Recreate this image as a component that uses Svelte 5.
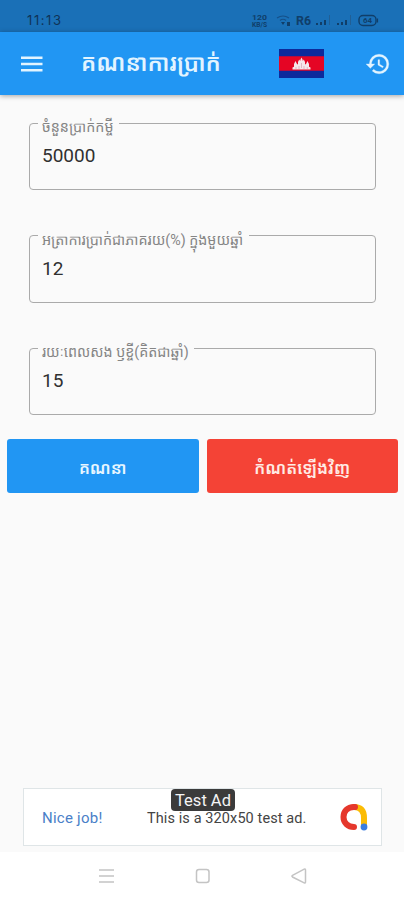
<script lang="ts">
	type Field = { id: string; label: string; value: string; notch: number };

	const initial: Field[] = [
		{ id: 'amount', label: 'ចំនួនប្រាក់កម្ចី', value: '50000', notch: 81 },
		{ id: 'rate', label: 'អត្រាការប្រាក់ជាភាគរយ(%) ក្នុងមួយឆ្នាំ', value: '12', notch: 211 },
		{ id: 'term', label: 'រយៈពេលសង ឫខ្ចី(គិតជាឆ្នាំ)', value: '15', notch: 156 }
	];

	let fields = $state(initial.map((field) => ({ ...field })));

	function reset() {
		fields = initial.map((field) => ({ ...field, value: '' }));
	}
</script>

<div class="screen">
	<div class="status-bar">
		<span class="clock">11:13</span>
		<svg class="status-icons" width="132" height="16" viewBox="0 0 132 16">
			<g class="tiny">
				<text x="1" y="7.500" textLength="15" lengthAdjust="spacingAndGlyphs">120</text>
				<text x="1" y="14.500" textLength="15" lengthAdjust="spacingAndGlyphs">KB/S</text>
			</g>
			<path d="M26 6q6-4 12 0M29 8.500q3-2.500 6 0" fill="none" stroke="#155089" stroke-width="1.200" />
			<path d="m30 10 2 3 2-3zM36 10h3v4h-3z" fill="#103e69" />
			<text class="carrier" x="45" y="13" textLength="15" lengthAdjust="spacingAndGlyphs">R6</text>
			<path d="M65 11h2v2h-2zM69 10h2v3h-2zM73 8h2v5h-2zM86 11h2v2h-2zM90 10h2v3h-2zM94 8h2v5h-2z" fill="#103e69" />
			<path d="M78.500 3v10M99.500 3v10" stroke="#215f95" />
			<rect x="108" y="3.500" width="17" height="10" rx="4" fill="none" stroke="#103e69" stroke-width="1.400" />
			<path d="M126.500 6.500v4" stroke="#103e69" stroke-width="1.200" />
			<text class="tiny" x="112" y="11" textLength="9" lengthAdjust="spacingAndGlyphs">64</text>
		</svg>
	</div>

	<header class="app-bar">
		<button class="icon-button menu" aria-label="menu">
			<svg width="22" height="16" viewBox="0 0 22 16">
				<path d="M0 1.700h21.500M0 8h21.500M0 14.300h21.500" stroke="#e2f4ff" stroke-width="2.400" />
			</svg>
		</button>
		<h1>គណនាការប្រាក់</h1>
		<svg class="flag" width="45" height="29" viewBox="0 0 45 29">
			<path d="M0 0h45v29H0z" fill="#0c2a9c" />
			<path d="M0 7.300h45v14.400H0z" fill="#e50524" />
			<path
				d="M13.500 20.500v-2l1.500-.7v-2.800l1.500-3 1.500 3v.5l1-.5v-2l1.200-2.500 1 1.500.3-1.500 1-2 1 2 .3 1.500 1-1.500 1.200 2.500v2l1 .5v-.5l1.500-3 1.500 3v2.800l1.500.7v2z"
				fill="#f5e9ec"
			/>
			<path d="M17 18v2M20 17v3M22.500 14v5M25 17v3M28.300 18v2" stroke="#d5a6b5" stroke-width=".7" />
		</svg>
		<button class="icon-button history" aria-label="history">
			<svg width="26" height="26" viewBox="0 0 24 24" fill="#e2f4ff" stroke="#e2f4ff" stroke-width=".3">
				<path
					d="M13 3a9 9 0 0 0-9 9H1l3.890 3.890.07.14L9 12H6c0-3.870 3.130-7 7-7s7 3.130 7 7-3.130 7-7 7c-1.930 0-3.680-.79-4.940-2.060l-1.420 1.420A8.954 8.954 0 0 0 13 21a9 9 0 0 0 0-18zm-1 5v5l4.280 2.540.72-1.210-3.500-2.080V8H12z"
				/>
			</svg>
		</button>
	</header>

	<main>
		<form onsubmit={(event) => event.preventDefault()}>
			{#each fields as field (field.id)}
				<fieldset>
					<legend style="width: {field.notch}px">
						<label for={field.id}>{field.label}</label>
					</legend>
					<input id={field.id} type="text" bind:value={field.value} />
				</fieldset>
			{/each}
		</form>
		<div class="actions">
			<button class="calculate">គណនា</button>
			<button class="reset" onclick={reset}>កំណត់ឡើងវិញ</button>
		</div>
	</main>

	<section class="ad">
		<span class="ad-badge">Test Ad</span>
		<span class="ad-title">Nice job!</span>
		<span class="ad-text">This is a 320x50 test ad.</span>
		<svg class="ad-logo" width="30" height="30" viewBox="0 0 30 30" fill="none" stroke-width="6" stroke-linecap="round">
			<path d="M15 5Q25 5 25 16v7" stroke="#fbbc05" />
			<path d="M16 5C8 4.500 4.500 10 4.500 15c0 6 4.500 10 10.500 10" stroke="#e5372c" />
			<circle cx="25" cy="25" r="3.400" fill="#3b7de0" />
		</svg>
	</section>

	<nav>
		<svg width="404" height="48" viewBox="0 0 404 48" fill="none" stroke="#c4c4c4" stroke-width="1.500">
			<path d="M99 18h15M99 24h15M99 30h15" />
			<rect x="196.500" y="17.500" width="12.500" height="13" rx="2.500" />
			<path d="M305.500 18v12q0 1.500-1.300.8L292.500 25q-1.200-1 0-1.700L304.200 17.200q1.300-.7 1.300.8z" />
		</svg>
	</nav>
</div>

<style>
	:global(body) {
		margin: 0;
	}
	.screen {
		display: flex;
		flex-direction: column;
		width: 404px;
		height: 900px;
		overflow: hidden;
		background: #fafafa;
		font-family: Roboto, 'Noto Sans Khmer', 'Khmer OS', 'Noto Sans', sans-serif;
	}
	button {
		padding: 0;
		border: 0;
		font-family: inherit;
	}
	.status-bar {
		display: flex;
		flex: none;
		justify-content: space-between;
		box-sizing: border-box;
		height: 32px;
		padding: 12px 21px 0 27px;
		background: #1a70b7;
	}
	.clock {
		font: 13px/17px Inter, sans-serif;
		letter-spacing: 1.6px;
		color: #103356;
	}
	.tiny,
	.carrier {
		font: bold 7px Roboto, sans-serif;
		fill: #103e69;
	}
	.carrier {
		font-size: 12px;
	}
	.app-bar {
		display: flex;
		flex: none;
		align-items: center;
		box-sizing: border-box;
		height: 63px;
		padding-left: 21px;
		background: #2196f3;
		box-shadow: 0 1px 5px rgba(0, 0, 0, 0.35);
		z-index: 1;
	}
	.icon-button {
		display: flex;
		background: none;
	}
	h1 {
		width: 198px;
		margin: 0 0 0 38px;
		font-size: 23px;
		font-weight: 600;
		line-height: 36px;
		white-space: nowrap;
		color: #e2f4ff;
	}
	.history {
		margin-left: 41px;
	}
	main {
		flex: 1;
	}
	form {
		display: flex;
		flex-direction: column;
		gap: 37.5px;
		padding: 20px 28px 0 29px;
	}
	fieldset {
		box-sizing: border-box;
		height: 75px;
		min-width: 0;
		margin: 0;
		padding: 0 13px 0 8px;
		border: 1px solid #aaa;
		border-radius: 4px;
	}
	legend {
		box-sizing: border-box;
		height: 16px;
		padding: 3px 0 0 4px;
		font-size: 14.3px;
		line-height: 18px;
		white-space: nowrap;
		color: #858585;
	}
	input {
		display: block;
		width: 100%;
		height: 32px;
		margin-top: 9px;
		padding: 0 4px;
		border: 0;
		outline: none;
		background: none;
		font: 19px/32px Roboto, sans-serif;
		color: #303030;
	}
	.actions {
		display: flex;
		gap: 8px;
		padding: 24px 6px 0 7px;
	}
	.actions button {
		flex: 1;
		height: 54px;
		padding-top: 2px;
		border-radius: 3px;
		font-size: 16.5px;
		font-weight: 600;
		color: #e8f6ff;
	}
	.actions .calculate {
		background: #2196f3;
	}
	.actions .reset {
		background: #f44336;
		color: #ffebe5;
	}
	.ad {
		position: relative;
		display: flex;
		flex: none;
		align-items: center;
		box-sizing: border-box;
		width: 359px;
		height: 58px;
		margin: 0 0 6px 23px;
		padding-left: 18px;
		border: 1px solid #dfe5e7;
		background: #fff;
		font-family: Roboto, sans-serif;
		font-size: 15px;
		line-height: 14px;
		white-space: nowrap;
	}
	.ad-title {
		width: 105px;
		padding-top: 1px;
		letter-spacing: 0.25px;
		color: #4a80c8;
	}
	.ad-text {
		width: 192px;
		padding-top: 3px;
		font-size: 14.5px;
		letter-spacing: 0.1px;
		color: #444;
	}
	.ad-badge {
		position: absolute;
		top: 0;
		left: 147px;
		box-sizing: border-box;
		width: 64px;
		height: 22px;
		padding-top: 4px;
		border-radius: 4px;
		background: #3b3b3b;
		font-size: 16.5px;
		line-height: 16px;
		text-align: center;
		color: #f5f5f5;
	}
	nav {
		flex: none;
		height: 48px;
		background: #fff;
	}
	nav svg {
		display: block;
	}
</style>
